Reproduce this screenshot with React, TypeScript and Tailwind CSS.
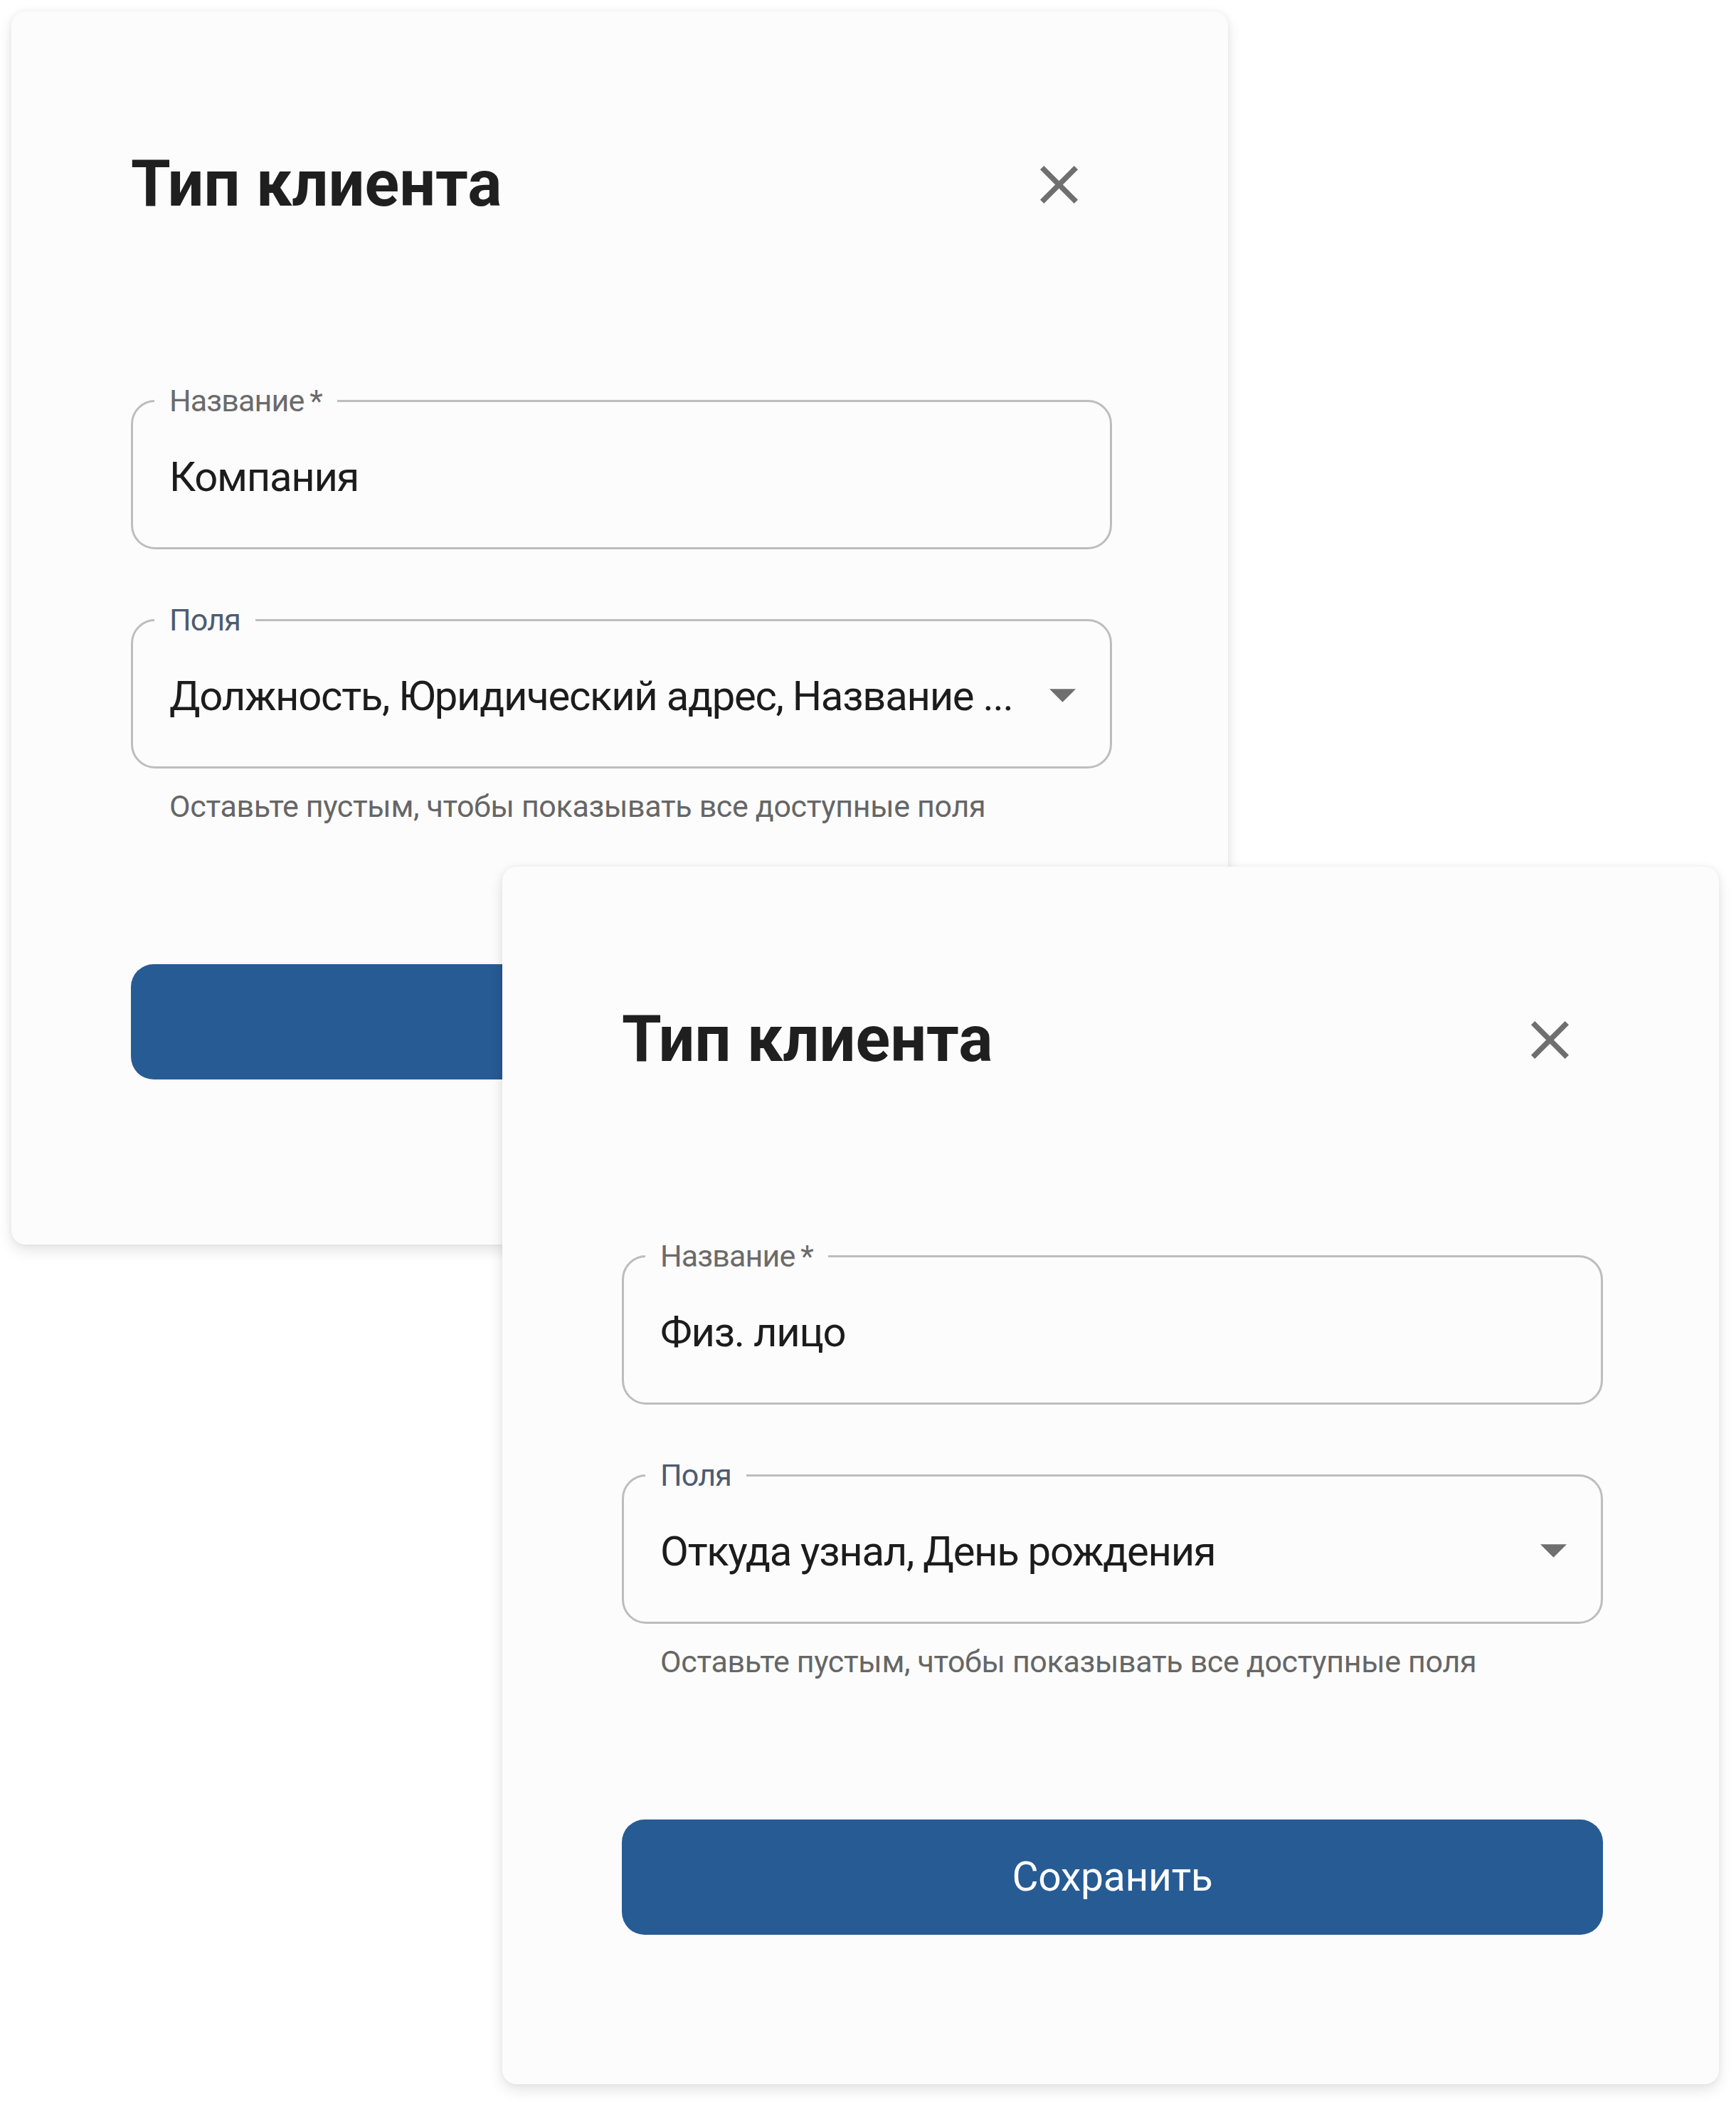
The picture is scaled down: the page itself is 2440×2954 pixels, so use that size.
import type { ReactNode } from 'react';

interface ClientTypeCardProps {
  name: string;
  fields: string;
  className: string;
}

function CloseIcon() {
  return (
    <svg viewBox="0 0 24 24" className="w-[91px] h-[91px] mr-[29px] fill-[#6f6f6f]">
      <path d="M19 6.41 17.59 5 12 10.59 6.41 5 5 6.41 10.59 12 5 17.59 6.41 19 12 13.41 17.59 19 19 17.59 13.41 12z" />
    </svg>
  );
}

function OutlinedField({ label, labelColor, children }: { label: string; labelColor: string; children: ReactNode }) {
  return (
    <div className="relative h-[210px] rounded-[34px] border-[3px] border-[#bdbdbd] flex items-center pt-[8px] pl-[51px]">
      <span
        className={`absolute left-[30px] -top-[23px] px-[21px] bg-[#fcfcfc] text-[43px] leading-[43px] tracking-[-0.02em] ${labelColor}`}
      >
        {label}
      </span>
      {children}
    </div>
  );
}

function ClientTypeCard({ name, fields, className }: ClientTypeCardProps) {
  return (
    <div
      className={`absolute w-[1710px] rounded-[20px] bg-[#fcfcfc] shadow-[0_8px_20px_rgba(0,0,0,0.11),0_0_8px_rgba(0,0,0,0.05)] pt-[198px] pl-[168px] pr-[163px] ${className}`}
    >
      {/* Header */}
      <div className="flex items-center justify-between h-[90px]">
        <h2 className="text-[90px] leading-none font-bold text-[#1f1f1f]">Тип клиента</h2>
        <CloseIcon />
      </div>

      <div className="mt-[258px]">
        <OutlinedField label={'Название\u2009*'} labelColor="text-[#6b6b6b]">
          <span className="text-[58px] leading-[1.3] tracking-[-0.022em] text-[#1c1c1c]">{name}</span>
        </OutlinedField>
      </div>

      <div className="mt-[98px]">
        <OutlinedField label="Поля" labelColor="text-[#4e5b72]">
          <span className="flex-1 min-w-0 truncate text-[58px] leading-[1.3] tracking-[-0.022em] text-[#1c1c1c]">
            {fields}
          </span>
          <svg viewBox="0 0 10 5" className="shrink-0 w-[37px] h-[19px] ml-[24px] mr-[48px] mb-[4px] fill-[#6f6f6f]">
            <path d="M0 0l5 5 5-5z" />
          </svg>
        </OutlinedField>
      </div>

      <p className="mt-[32px] ml-[54px] text-[43px] leading-none tracking-[-0.008em] text-[#666666]">
        Оставьте пустым, чтобы показывать все доступные поля
      </p>

      <button className="mt-[200px] w-full h-[162px] rounded-[32px] bg-[#275b94] text-white text-[57px] font-normal tracking-[-0.005em]">
        Сохранить
      </button>
    </div>
  );
}

export default function App() {
  return (
    <div className="relative w-[2440px] h-[2954px] bg-white overflow-hidden font-['Roboto','Liberation_Sans',sans-serif]">
      <ClientTypeCard
        name="Компания"
        fields="Должность, Юридический адрес, Название ..."
        className="left-[16px] top-[16px] h-[1733px]"
      />
      <ClientTypeCard
        name="Физ. лицо"
        fields="Откуда узнал, День рождения"
        className="left-[706px] top-[1218px] h-[1711px]"
      />
    </div>
  );
}
